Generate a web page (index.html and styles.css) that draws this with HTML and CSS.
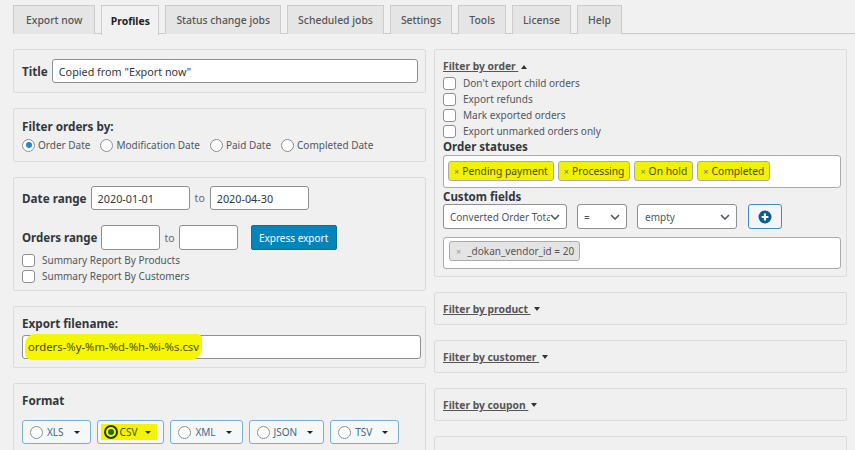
FILE: index.html
```html
<!DOCTYPE html>
<html lang="en">
<head>
<meta charset="utf-8">
<title>Profiles</title>
<link rel="stylesheet" href="styles.css">
</head>
<body>
<nav class="tabs">
  <a class="tab">Export now</a>
  <a class="tab active">Profiles</a>
  <a class="tab">Status change jobs</a>
  <a class="tab">Scheduled jobs</a>
  <a class="tab">Settings</a>
  <a class="tab">Tools</a>
  <a class="tab">License</a>
  <a class="tab">Help</a>
</nav>

<div class="columns">
  <div class="col">
    <section class="panel title-panel">
      <span class="lbl">Title</span>
      <div class="field grow">Copied from "Export now"</div>
    </section>

    <section class="panel filter-panel">
      <div class="lbl">Filter orders by:</div>
      <div class="radios">
        <span class="opt"><span class="radio checked"></span>Order Date</span>
        <span class="opt"><span class="radio"></span>Modification Date</span>
        <span class="opt"><span class="radio"></span>Paid Date</span>
        <span class="opt"><span class="radio"></span>Completed Date</span>
      </div>
    </section>

    <section class="panel range-panel">
      <div class="row">
        <span class="lbl">Date range</span>
        <div class="field date">2020-01-01</div>
        <span class="to">to</span>
        <div class="field date">2020-04-30</div>
      </div>
      <div class="row row2">
        <span class="lbl">Orders range</span>
        <div class="field num"></div>
        <span class="to">to</span>
        <div class="field num"></div>
        <button class="primary">Express export</button>
      </div>
      <div class="checks">
        <div class="check"><span class="box"></span>Summary Report By Products</div>
        <div class="check"><span class="box"></span>Summary Report By Customers</div>
      </div>
    </section>

    <section class="panel file-panel">
      <div class="lbl">Export filename:</div>
      <div class="field wide"><span class="hl">orders-%y-%m-%d-%h-%i-%s.csv</span></div>
    </section>

    <section class="panel format-panel">
      <div class="lbl">Format</div>
      <div class="formats">
        <span class="fmt"><span class="radio"></span>XLS<span class="caret"></span></span>
        <span class="fmt on"><span class="hlbox"><span class="radio dark"></span>CSV<span class="caret"></span></span></span>
        <span class="fmt"><span class="radio"></span>XML<span class="caret"></span></span>
        <span class="fmt"><span class="radio"></span>JSON<span class="caret"></span></span>
        <span class="fmt"><span class="radio"></span>TSV<span class="caret"></span></span>
      </div>
    </section>
  </div>

  <div class="col">
    <section class="panel rpanel order-panel">
      <div class="flink first"><u>Filter by order&nbsp;</u><span class="tri up"></span></div>
      <div class="check small"><span class="box"></span>Don't export child orders</div>
      <div class="check small"><span class="box"></span>Export refunds</div>
      <div class="check small"><span class="box"></span>Mark exported orders</div>
      <div class="check small"><span class="box"></span>Export unmarked orders only</div>
      <div class="lbl sub">Order statuses</div>
      <div class="tagbox">
        <span class="tag yellow"><i>×</i>Pending payment</span>
        <span class="tag yellow"><i>×</i>Processing</span>
        <span class="tag yellow"><i>×</i>On hold</span>
        <span class="tag yellow"><i>×</i>Completed</span>
      </div>
      <div class="lbl sub cf">Custom fields</div>
      <div class="cf-row">
        <div class="select s1"><span class="sv">Converted Order Total</span><svg class="chev" viewBox="0 0 10 6"><path d="M1 1l4 4 4-4" fill="none" stroke="#50575e" stroke-width="1.6"/></svg></div>
        <div class="select s2"><span class="sv">=</span><svg class="chev" viewBox="0 0 10 6"><path d="M1 1l4 4 4-4" fill="none" stroke="#50575e" stroke-width="1.6"/></svg></div>
        <div class="select s3"><span class="sv">empty</span><svg class="chev" viewBox="0 0 10 6"><path d="M1 1l4 4 4-4" fill="none" stroke="#50575e" stroke-width="1.6"/></svg></div>
        <button class="plus"><svg viewBox="0 0 14 14" width="14" height="14"><circle cx="7" cy="7" r="6.5" fill="#0a5d8f"/><path d="M7 3.6v6.8M3.6 7h6.8" stroke="#fff" stroke-width="2.2"/></svg></button>
      </div>
      <div class="tagbox vendor">
        <span class="tag grey"><i>×</i>_dokan_vendor_id = 20</span>
      </div>
    </section>

    <section class="panel rpanel closed"><div class="flink"><u>Filter by product&nbsp;</u><span class="tri"></span></div></section>
    <section class="panel rpanel closed"><div class="flink"><u>Filter by customer&nbsp;</u><span class="tri"></span></div></section>
    <section class="panel rpanel closed"><div class="flink"><u>Filter by coupon&nbsp;</u><span class="tri"></span></div></section>
    <section class="panel rpanel closed"></section>
  </div>
</div>
</body>
</html>
```

FILE: styles.css
```css
* { box-sizing: border-box; }
html, body { margin: 0; background: #f1f1f1; }
body {
  font-family: "Noto Sans", "Open Sans", sans-serif;
  font-size: 10px;
  color: #444;
  overflow: hidden;
  height: 450px;
}

/* tabs */
.tabs {
  display: flex;
  gap: 6px;
  margin: 5px 0 0 13px;
  border-bottom: 1px solid #ccc;
  height: 29px;
}
.tab {
  height: 29px;
  padding: 0 10px;
  display: flex;
  align-items: center;
  background: #e5e5e5;
  border: 1px solid #ccc;
  border-bottom: none;
  color: #555;
  font-size: 10.4px;
  font-weight: 500;
}
.tab:first-child { padding: 0 12px; }
.tab.active {
  background: #f1f1f1;
  color: #222;
  font-weight: 700;
  padding: 0 8.5px;
  height: 30px;
  margin-bottom: -1px;
}

/* columns */
.columns {
  display: grid;
  grid-template-columns: 413px 413px;
  gap: 8px;
  margin: 15px 0 0 13px;
}
.col { display: flex; flex-direction: column; gap: 15px; }

.panel {
  border: 1px solid #dcdcdc;
  border-radius: 2px;
  background: #f0f0f0;
  padding: 8px 7px 7px 8px;
}
.lbl {
  font-weight: 700;
  font-size: 11.7px;
  color: #32373c;
  line-height: 18px;
}

.field {
  height: 24px;
  background: #fff;
  border: 1px solid #8c8f94;
  border-radius: 3px;
  padding: 0 6px;
  display: flex;
  align-items: center;
  font-size: 10.8px;
  color: #32373c;
}
.grow { flex: 1; }

.title-panel { display: flex; align-items: center; gap: 4px; padding-top: 9px; padding-bottom: 9px; }

/* radios */
.radios { display: flex; gap: 10px; margin-top: 1px; height: 18px; align-items: center; }
.opt { display: flex; align-items: center; gap: 3px; color: #50575e; }
.radio {
  width: 13px; height: 13px;
  border: 1px solid #8c8f94;
  border-radius: 50%;
  background: #fff;
  position: relative;
  flex: none;
}
.radio.checked::after {
  content: ""; position: absolute; left: 2.5px; top: 2.5px;
  width: 6px; height: 6px; border-radius: 50%; background: #1e8cbe;
}
.radio.dark { width: 14px; height: 14px; border: 2px solid #1f3a00; background: #f4f400; }
.radio.dark::after {
  content: ""; position: absolute; left: 2px; top: 2px;
  width: 6px; height: 6px; border-radius: 50%; background: #1f6e10;
}

/* range panel */
.range-panel { padding-top: 8px; padding-bottom: 6px; }
.row { display: flex; align-items: center; gap: 4px; }
.row2 { margin-top: 15px; }
.field.date { width: 99px; }
.field.num { width: 59px; height: 25px; }
.row2 .lbl { font-size: 11.5px; }
.row2 .to { padding: 0; }
.to { color: #666; padding: 0 1px; font-size: 10.5px; }
.primary {
  margin-left: 9px;
  height: 25px;
  width: 86px;
  padding: 0;
  background: #0085ba;
  border: 1px solid #0073aa;
  border-radius: 2px;
  color: #fff;
  font-family: inherit;
  font-size: 10px;
}
.checks { margin-top: 2px; }
.check { display: flex; align-items: center; gap: 7px; height: 16px; color: #50575e; }
.box {
  width: 13px; height: 13px;
  border: 1px solid #8c8f94;
  border-radius: 3px;
  background: #fff;
  flex: none;
}

/* filename */
.file-panel { padding: 7px 4px 8px 8px; }
.field.wide { margin-top: 3px; height: 24px; padding-left: 5px; }
.hl {
  background: #f6f600;
  padding: 5px 3px 6px 3px;
  margin-left: -3px;
  border-radius: 10px 5px 12px 7px;
  color: #4a4a00;
  font-size: 11.3px;
}

/* format */
.format-panel { padding-top: 7px; padding-bottom: 30px; }
.formats { display: flex; gap: 6px; margin-top: 11px; }
.fmt {
  height: 24px;
  display: flex; align-items: center;
  padding: 0 10px 0 7px;
  border: 1px solid #7aaed3;
  border-radius: 3px;
  background: #f6f7f7;
  color: #3b6a8c;
  font-size: 10px;
  gap: 4px;
}
.fmt .caret, .hlbox .caret {
  width: 0; height: 0; margin-left: 6px;
  border-left: 3px solid transparent;
  border-right: 3px solid transparent;
  border-top: 3.5px solid #222;
}
.fmt.on { padding: 0 6px 0 3px; }
.hlbox {
  display: flex; align-items: center; gap: 2px;
  background: #f4f400;
  padding: 0 6px 0 3px;
  height: 16px;
  color: #3c5600;
}

/* right panels */
.rpanel { padding: 8px 5px 7px 8px; }
.flink {
  font-size: 10.3px;
  font-weight: 700;
  color: #555;
  line-height: 16px;
  display: flex; align-items: center; gap: 3px;
}
.flink.first { line-height: 17px; }
.flink u { text-decoration: underline; }
.tri {
  width: 0; height: 0;
  border-left: 3px solid transparent;
  border-right: 3px solid transparent;
  border-top: 4px solid #333;
}
.tri.up { border-top: none; border-bottom: 4px solid #333; }
.check.small { font-size: 10px; }
.lbl.sub { line-height: 16px; font-size: 11.5px; }
.lbl.sub.cf { line-height: 15px; margin-top: 1px; }
.tagbox {
  background: #fff;
  border: 1px solid #aaa;
  border-radius: 3px;
  min-height: 33px;
  padding: 5px 4px;
  display: flex; gap: 4px; flex-wrap: wrap;
}
.tag {
  height: 20px;
  border: 1px solid #aaa;
  border-radius: 3px;
  padding: 0 5px 0 5px;
  display: flex; align-items: center;
  font-size: 10.3px;
}
.tag i { font-style: normal; font-size: 9px; margin-right: 3px; color: #888; }
.tag.yellow { background: #f2f200; color: #4a4a10; }
.tag.yellow i { color: #777; }
.tag.grey { background: #e4e4e4; color: #555; padding: 0 5px 0 6px; font-size: 10px; }
.tag.grey i { margin-right: 6px; color: #999; }

.cf-row { display: flex; gap: 10px; margin: 0 0 8px; }
.select {
  height: 25px;
  background: #fff;
  border: 1px solid #8c8f94;
  border-radius: 3px;
  display: flex; align-items: center;
  padding: 0 6px;
  font-size: 10px;
  color: #50575e;
  overflow: hidden;
}
.sv { white-space: nowrap; overflow: hidden; }
.chev { width: 10px; height: 6px; flex: none; }
.s1 { width: 124px; }
.s1 .sv { width: 100px; flex: none; }
.s2 { width: 50px; justify-content: space-between; }
.s3 { width: 100px; justify-content: space-between; padding-left: 7px; }
.plus {
  width: 34px; height: 25px; margin-left: 1px;
  border: 1px solid #3c8dc5;
  border-radius: 3px;
  background: #f3f5f6;
  display: flex; align-items: center; justify-content: center;
  padding: 0;
}
.vendor { min-height: 32px; padding: 3px 5px; }

.closed { height: 33px; }
```
